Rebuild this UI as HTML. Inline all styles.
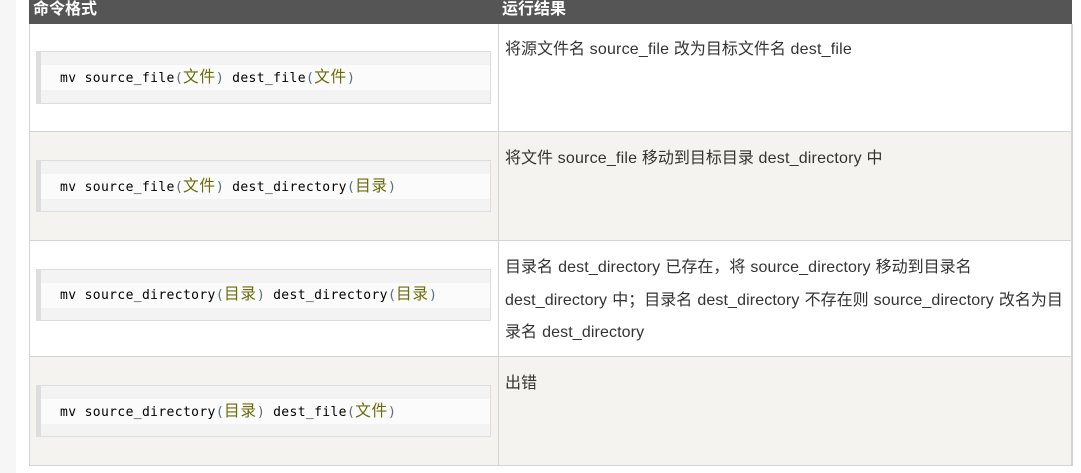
<!DOCTYPE html>
<html lang="zh">
<head>
<meta charset="utf-8">
<style>
html,body{margin:0;padding:0;width:1081px;height:473px;overflow:hidden;background:#fff}
body{position:relative;font-family:"Liberation Sans","Noto Sans CJK SC",sans-serif;color:#333}
.a{position:absolute}
.side{left:0;top:0;width:16px;height:473px;background:#f6f6f6}
.head{left:29px;top:0;width:1043px;height:24px;background:#555}
.th{top:-2px;color:#fff;font-weight:bold;font-size:16px;line-height:24px;white-space:nowrap}
.row{left:29px;width:1041px;border:1px solid #d4d4d4;border-top:0;border-right-width:2px;box-sizing:content-box}
.vl{left:498px;top:24px;width:1px;height:441px;background:#d4d4d4}
.code{left:36px;width:455px;height:52px;box-sizing:border-box;background:#f3f3f3;border:1px solid #ddd;border-left:5px solid #ddd}
.ln{position:absolute;left:0;right:0;top:13px;height:25px;background:#fbfbfb;padding-left:19px;font:13px/27px "DejaVu Sans Mono",monospace;letter-spacing:.37px;color:#000;white-space:nowrap}
.ln span{color:#6b6b0a;font:15.7px/1 "Noto Sans CJK SC",sans-serif;letter-spacing:.7px}
.ln b{font-weight:normal;font-size:13.6px;letter-spacing:0;color:#5a6f80}
.td{left:505px;width:565px;font-size:16px;line-height:32.5px;color:#333;white-space:nowrap}
.td i{font-style:normal;letter-spacing:.2px}
.td u{text-decoration:none;letter-spacing:.12px;word-spacing:.5px}
</style>
</head>
<body>
<div class="a side"></div>
<div class="a head"></div>
<div class="a th" style="left:33px">命令格式</div>
<div class="a th" style="left:502px">运行结果</div>

<div class="a row" style="top:24px;height:107px;background:#fff"></div>
<div class="a row" style="top:132px;height:108px;background:#f4f3ef"></div>
<div class="a row" style="top:241px;height:115px;background:#fff"></div>
<div class="a row" style="top:357px;height:108px;background:#f4f3ef"></div>
<div class="a vl"></div>

<div class="a code" style="top:51px;height:53px"><div class="ln">mv source_file<b>(</b><span>文件</span><b>)</b> dest_file<b>(</b><span>文件</span><b>)</b></div></div>
<div class="a code" style="top:160px"><div class="ln">mv source_file<b>(</b><span>文件</span><b>)</b> dest_directory<b>(</b><span>目录</span><b>)</b></div></div>
<div class="a code" style="top:269px"><div class="ln" style="line-height:25px">mv source_directory<b>(</b><span>目录</span><b>)</b> dest_directory<b>(</b><span>目录</span><b>)</b></div></div>
<div class="a code" style="top:385px"><div class="ln">mv source_directory<b>(</b><span>目录</span><b>)</b> dest_file<b>(</b><span>文件</span><b>)</b></div></div>

<div class="a td" style="top:34px">将源文件名<i> source_file </i>改为目标文件名<i> dest_file</i></div>
<div class="a td" style="top:143px">将文件<i> source_file </i>移动到目标目录<i> dest_directory </i>中</div>
<div class="a td" style="top:252px">目录名<u> dest_directory </u>已存在，将<u> source_directory </u>移动到目录名<br><u>dest_directory </u>中；目录名<u> dest_directory </u>不存在则<u> source_directory </u>改名为目<br>录名<u> dest_directory</u></div>
<div class="a td" style="top:368px">出错</div>
</body>
</html>
